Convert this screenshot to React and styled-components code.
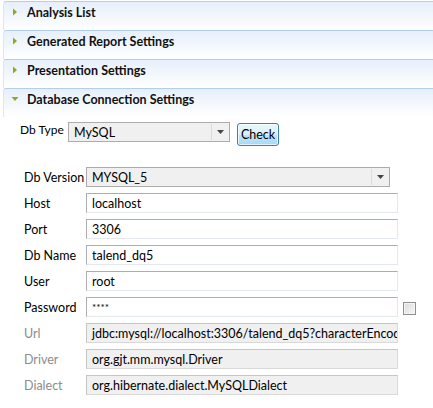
import React from "react";
import styled, { createGlobalStyle } from "styled-components";

const Global = createGlobalStyle`
  html, body { margin: 0; padding: 0; background: #fff; }
  body { font-family: Lato, "Liberation Sans", sans-serif; font-size: 12.5px; color: #000; }
`;

const Page = styled.div`
  width: 433px;
  height: 408px;
  overflow: hidden;
  padding-top: 1px;
  box-sizing: border-box;
`;

const SectionHeader = styled.div`
  margin-left: 3px;
  height: 29px;
  border-top: 1px solid #b4cfee;
  border-left: 1px solid #dbe7f5;
  border-top-left-radius: 3px;
  background: linear-gradient(to bottom, #e6effb 0%, #f4f8fd 55%, #ffffff 100%);
  display: flex;
  align-items: center;
  padding-left: 7px;
  gap: 8px;
  font-weight: 700;
  font-size: 12.5px;
  padding-bottom: 8px;
  box-sizing: border-box;
  color: #111;
`;

const Twisty = ({ open }) => (
  <svg width="8" height="8" viewBox="0 0 8 8" style={{ flex: "none" }}>
    {open ? (
      <polygon points="0.5,2 7.5,2 4,6" fill="#8fa62b" />
    ) : (
      <polygon points="2,0.5 6,4 2,7.5" fill="#8fa62b" />
    )}
  </svg>
);

const Content = styled.div`
  padding-top: 5px;
`;

const TypeRow = styled.div`
  display: flex;
  align-items: flex-start;
  padding-left: 20px;
  height: 24px;
`;

const Label = styled.span`
  color: ${(p) => (p.$disabled ? "#8c8c8c" : "#000")};
  white-space: nowrap;
`;

const TypeLabel = styled(Label)`
  width: 48px;
  line-height: 16px;
  font-size: 12px;
`;

const Combo = styled.div`
  width: ${(p) => p.$w}px;
  height: 20px;
  box-sizing: border-box;
  border: 1px solid #acacac;
  background: #f0f0f0;
  display: flex;
  align-items: stretch;
`;

const ComboText = styled.div`
  flex: 1;
  padding-left: 5px;
  display: flex;
  align-items: center;
  color: #000;
`;

const ComboArrow = styled.div`
  width: 16px;
  border-left: 1px solid #dcdcdc;
  margin: 1px;
  display: flex;
  align-items: center;
  justify-content: center;
`;

const Arrow = () => (
  <svg width="7" height="4" viewBox="0 0 7 4">
    <polygon points="0,0 7,0 3.5,4" fill="#444" />
  </svg>
);

const CheckButton = styled.button`
  margin-left: 7px;
  margin-top: 1px;
  width: 42px;
  height: 23px;
  box-sizing: border-box;
  border: 1px solid #3c7fb1;
  border-radius: 3px;
  background: linear-gradient(to bottom, #eaf6fd 0%, #d9f0fc 50%, #bee6fd 51%, #a7d9f5 100%);
  box-shadow: inset 0 0 0 1px rgba(255, 255, 255, 0.7);
  font-family: Lato, "Liberation Sans", sans-serif;
  font-size: 12.5px;
  color: #000;
  padding: 0;
`;

const Grid = styled.div`
  margin-top: 21px;
  padding-left: 24px;
  display: grid;
  grid-template-columns: 62px 312px 18px;
  grid-auto-rows: 20px;
  row-gap: 6px;
  align-items: center;
`;

const Field = styled.div`
  height: 20px;
  box-sizing: border-box;
  border: 1px solid;
  border-color: ${(p) => (p.$disabled ? "#c6c6c6 #d9d9d9 #d9d9d9 #c6c6c6" : "#abadb3 #e3e9ef #e3e9ef #abadb3")};
  background: ${(p) => (p.$disabled ? "#f0f0f0" : "#fff")};
  padding-left: 5px;
  display: flex;
  align-items: center;
  white-space: nowrap;
  overflow: hidden;
  color: #000;
  font-size: ${(p) => (p.$pw ? "10px" : "12.5px")};
`;

const CheckBox = styled.div`
  width: 13px;
  height: 13px;
  box-sizing: border-box;
  margin-left: 5px;
  margin-top: 2px;
  border: 1px solid #8f8f8f;
  background: linear-gradient(135deg, #dcdcdc 0%, #f6f6f6 100%);
  box-shadow: inset 0 0 0 1px #f4f4f4;
`;

const sections = ["Analysis List", "Generated Report Settings", "Presentation Settings"];

const rows = [
  { label: "Host", value: "localhost" },
  { label: "Port", value: "3306" },
  { label: "Db Name", value: "talend_dq5" },
  { label: "User", value: "root" },
  { label: "Password", value: "****", pw: true, check: true },
  { label: "Url", value: "jdbc:mysql://localhost:3306/talend_dq5?characterEncodir", disabled: true },
  { label: "Driver", value: "org.gjt.mm.mysql.Driver", disabled: true },
  { label: "Dialect", value: "org.hibernate.dialect.MySQLDialect", disabled: true },
];

export default function App() {
  return (
    <Page>
      <Global />
      {sections.map((s) => (
        <SectionHeader key={s}>
          <Twisty />
          {s}
        </SectionHeader>
      ))}
      <SectionHeader>
        <Twisty open />
        Database Connection Settings
      </SectionHeader>
      <Content>
        <TypeRow>
          <TypeLabel>Db Type</TypeLabel>
          <Combo $w={162}>
            <ComboText>MySQL</ComboText>
            <ComboArrow>
              <Arrow />
            </ComboArrow>
          </Combo>
          <CheckButton>Check</CheckButton>
        </TypeRow>
        <Grid>
          <Label>Db Version</Label>
          <Combo $w={304}>
            <ComboText>MYSQL_5</ComboText>
            <ComboArrow>
              <Arrow />
            </ComboArrow>
          </Combo>
          <span />
          {rows.map((r) => (
            <React.Fragment key={r.label}>
              <Label $disabled={r.disabled}>{r.label}</Label>
              <Field $disabled={r.disabled} $pw={r.pw}>{r.value}</Field>
              {r.check ? <CheckBox /> : <span />}
            </React.Fragment>
          ))}
        </Grid>
      </Content>
    </Page>
  );
}
